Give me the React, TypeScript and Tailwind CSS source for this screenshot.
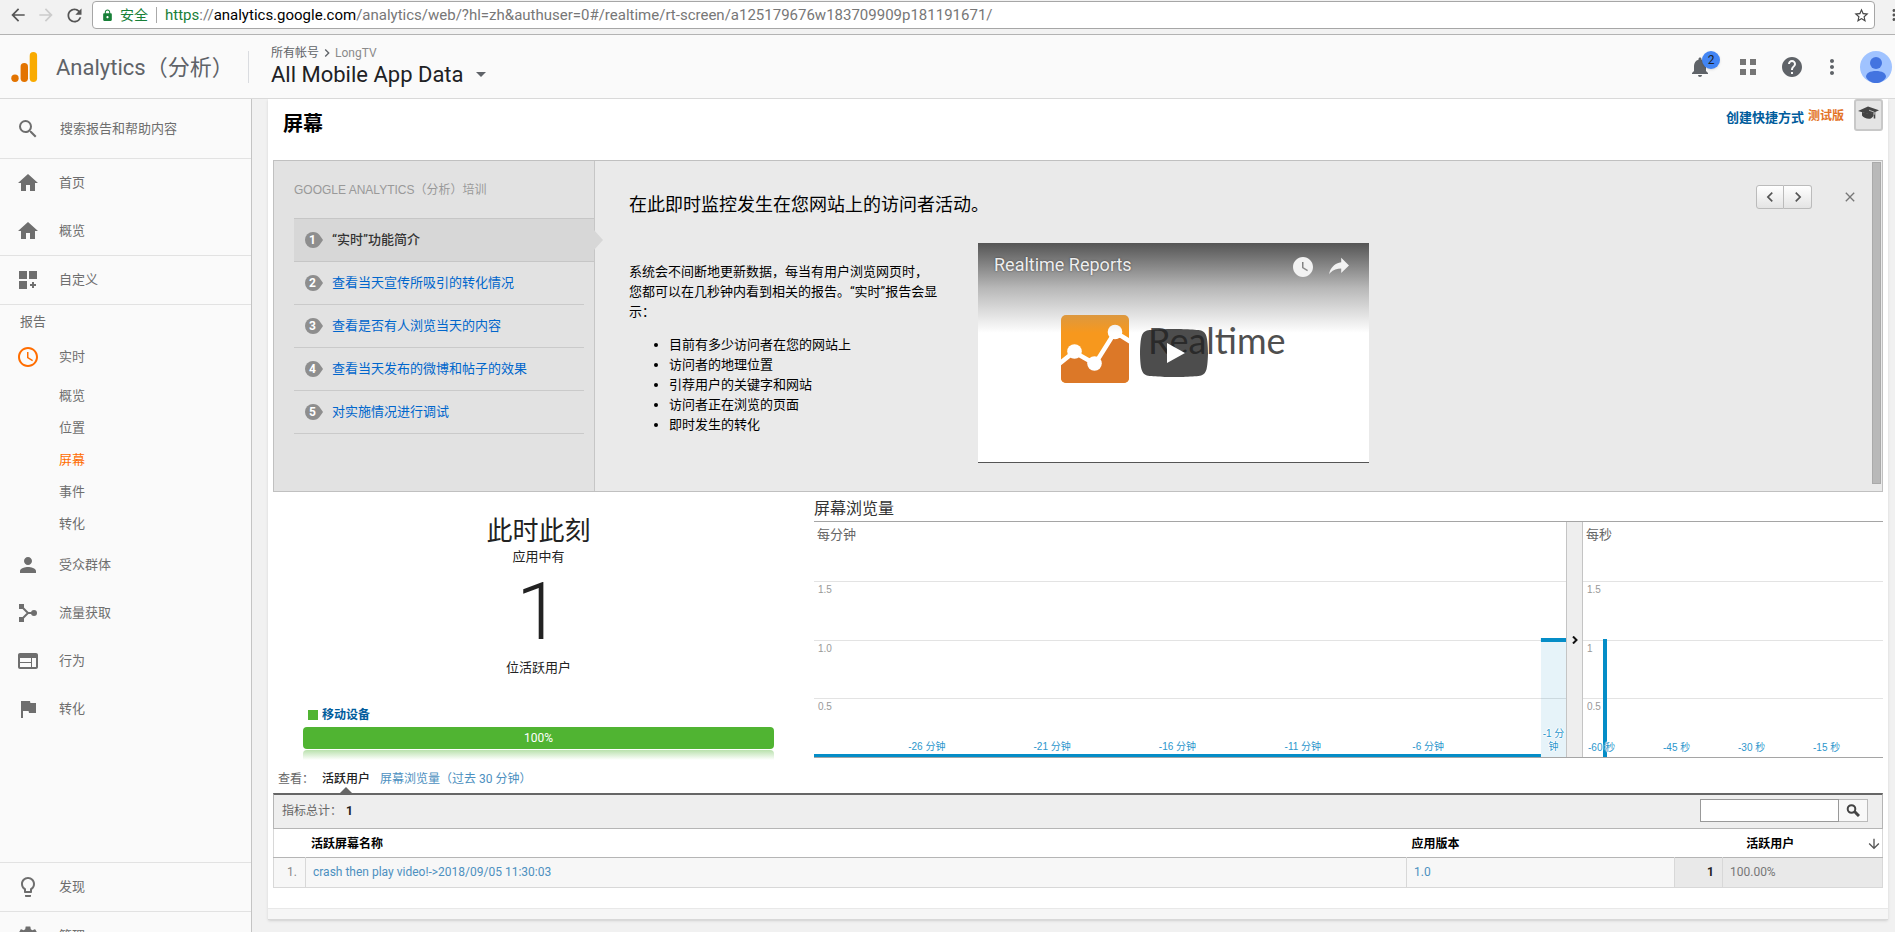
import type { ReactNode } from "react";
import {
  MdAccessTime,
  MdArrowBack,
  MdArrowDownward,
  MdArrowForward,
  MdChevronLeft,
  MdChevronRight,
  MdClose,
  MdFlag,
  MdHelp,
  MdHome,
  MdLightbulbOutline,
  MdLock,
  MdMoreVert,
  MdNotifications,
  MdPerson,
  MdRefresh,
  MdSearch,
  MdSettings,
  MdStarBorder,
  MdWatchLater,
  MdWeb,
} from "react-icons/md";

function BrowserBar() {
  return (
    <div className="flex h-[35px] shrink-0 items-center border-b border-[#b3b3b3] bg-[#f2f2f2] pb-1 pl-2">
      <button type="button" aria-label="后退" className="flex w-7 justify-start text-[#555]">
        <MdArrowBack size={20} />
      </button>
      <button type="button" aria-label="前进" className="flex w-7 justify-start text-[#ccc]">
        <MdArrowForward size={20} />
      </button>
      <button type="button" aria-label="刷新" className="flex w-7 justify-start text-[#555]">
        <MdRefresh size={21} />
      </button>
      <div className="flex h-7 flex-1 items-center rounded-sm border border-[#a6a6a6] bg-white px-2">
        <MdLock size={13} className="text-[#188038]" />
        <span className="ml-1.5 text-sm text-[#188038]">安全</span>
        <span className="mx-2 h-4 w-px bg-[#aaa]" />
        <span className="flex-1 text-[15px] text-[#777]">
          <span className="text-[#188038]">https</span>://
          <span className="text-black">analytics.google.com</span>
          /analytics/web/?hl=zh&amp;authuser=0#/realtime/rt-screen/a125179676w183709909p181191671/
        </span>
        <button type="button" aria-label="添加书签" className="-mr-1 text-[#444]">
          <MdStarBorder size={17} />
        </button>
      </div>
      <div className="flex w-5 justify-end overflow-hidden">
        <button type="button" aria-label="菜单" className="-mr-2 text-[#555]">
          <MdMoreVert size={18} />
        </button>
      </div>
    </div>
  );
}

function AnalyticsLogo() {
  return (
    <svg width="28" height="32" viewBox="0 0 28 32" aria-hidden="true">
      <circle cx="4" cy="27.300" r="3.700" fill="#e37400" />
      <rect x="9.600" y="12" width="7.400" height="19" rx="3.700" fill="#e37400" />
      <rect x="18.700" y="1" width="7.400" height="30" rx="3.700" fill="#f9ab00" />
    </svg>
  );
}

function Header() {
  return (
    <header className="flex h-16 shrink-0 items-center border-b border-[#d9d9d9] bg-[#fafafa] pl-[11px]">
      <AnalyticsLogo />
      <span className="ml-[17px] w-48 whitespace-nowrap pt-0.5 text-[22px] leading-8 text-[#5f6368]">
        Analytics（分析）
      </span>
      <span className="h-8 w-px bg-[#dadce0]" />
      <div className="ml-[22px]">
        <div className="flex items-center text-xs leading-4 text-[#5f6368]">
          <a href="#accounts">所有帐号</a>
          <MdChevronRight size={16} />
          <a href="#longtv" className="text-[#8a8a8a]">LongTV</a>
        </div>
        <button type="button" className="flex items-center text-[22px] leading-7 text-[#202124]">
          All Mobile App Data
          <svg width="10" height="5" viewBox="0 0 10 5" className="ml-3" aria-hidden="true">
            <path d="M0 0h10L5 5z" fill="#5f6368" />
          </svg>
        </button>
      </div>
      <div className="ml-auto flex items-center text-[#5f6368]">
        <button type="button" aria-label="通知" className="relative mr-[26px]">
          <MdNotifications size={24} />
          <span className="absolute -top-1 left-3.5 flex size-[18px] items-center justify-center rounded-full bg-[#4285f4] text-xs text-[#202124] shadow">
            2
          </span>
        </button>
        <button type="button" aria-label="应用" className="mr-[22px] p-0.5">
          <svg width="16" height="16" viewBox="0 0 16 16" fill="#757575" aria-hidden="true">
            <path d="M0 0h6v6H0zM10 0h6v6h-6zM0 10h6v6H0zM10 10h6v6h-6z" />
          </svg>
        </button>
        <button type="button" aria-label="帮助" className="mr-4">
          <MdHelp size={24} />
        </button>
        <button type="button" aria-label="更多" className="mr-4">
          <MdMoreVert size={24} />
        </button>
        <button type="button" aria-label="帐号" className="mr-[3px]">
          <svg width="32" height="32" viewBox="0 0 32 32" aria-hidden="true">
            <circle cx="16" cy="16" r="16" fill="#a0c3ff" />
            <circle cx="16" cy="12" r="6" fill="#4374e0" />
            <path d="M6 26c0-4 4-6 10-6s10 2 10 6c-2 4-6 6-10 6s-8-2-10-6z" fill="#4374e0" />
          </svg>
        </button>
      </div>
    </header>
  );
}

function CustomizeIcon() {
  return (
    <svg width="24" height="24" viewBox="0 0 24 24" fill="currentColor" aria-hidden="true">
      <path d="M3 3h8v8H3zM13 3h8v8h-8zM3 13h8v8H3zM16 14h2v2h2v2h-2v2h-2v-2h-2v-2h2z" />
    </svg>
  );
}

function AcquisitionIcon() {
  return (
    <svg width="24" height="24" viewBox="0 0 24 24" fill="currentColor" aria-hidden="true">
      <path d="M3 3h5v5H3zM3 16h5v5H3z" />
      <circle cx="18" cy="12" r="3" />
      <path d="M6 6l6 6-6 6M11 12h6" fill="none" stroke="currentColor" strokeWidth="2" />
    </svg>
  );
}

function GraduationCapIcon() {
  return (
    <svg width="21" height="14" viewBox="0 0 21 14" fill="currentColor" className="shrink-0" aria-hidden="true">
      <path d="M0 5L10 0.500 21 4.200 17.300 6v6.500h-1.600V6.800L12 8.500 0 5z" />
      <path d="M4 6l8 2 3.500-1.500V10c-1.500 2-3 2.800-4.500 2.800C8 12.800 5 11 4 9.500z" />
      <path d="M11 4.200l5.300 2v2.500" fill="none" stroke="#e4e4e4" strokeWidth="0.700" />
    </svg>
  );
}

function NavItem({ icon, label, active = false }: { icon: ReactNode; label: string; active?: boolean }) {
  return (
    <a href="#nav" className="flex h-12 items-center pl-4">
      <span className={active ? "mr-[19px] text-[#ff6d00]" : "mr-[19px]"}>{icon}</span>
      {label}
    </a>
  );
}

const REALTIME_PAGES = ["概览", "位置", "屏幕", "事件", "转化"];

function Sidebar() {
  return (
    <aside className="flex w-[252px] shrink-0 flex-col border-r border-[#c4c4c4] bg-[#fafafa] text-[13px] text-[#6e6e6e]">
      <label className="flex h-[60px] items-center border-b border-[#e2e2e2] pl-4">
        <MdSearch size={24} className="mr-5 shrink-0" />
        <input
          type="search"
          aria-label="搜索报告和帮助内容"
          placeholder="搜索报告和帮助内容"
          className="min-w-0 flex-1 bg-transparent outline-none placeholder:text-[#6e6e6e]"
        />
      </label>
      <nav>
        <div className="border-b border-[#e2e2e2]">
          <NavItem icon={<MdHome size={24} />} label="首页" />
          <NavItem icon={<MdHome size={24} />} label="概览" />
        </div>
        <div className="border-b border-[#e2e2e2]">
          <NavItem icon={<CustomizeIcon />} label="自定义" />
        </div>
        <div className="pb-px pl-5 pt-[7px] leading-5">报告</div>
        <NavItem icon={<MdAccessTime size={24} />} label="实时" active />
        <ul>
          {REALTIME_PAGES.map((page) => (
            <li key={page}>
              <a
                href="#page"
                className={
                  page === "屏幕"
                    ? "flex h-8 items-center pb-0.5 pl-[59px] text-[#ff6d00]"
                    : "flex h-8 items-center pb-0.5 pl-[59px]"
                }
              >
                {page}
              </a>
            </li>
          ))}
        </ul>
        <NavItem icon={<MdPerson size={24} />} label="受众群体" />
        <NavItem icon={<AcquisitionIcon />} label="流量获取" />
        <NavItem icon={<MdWeb size={24} />} label="行为" />
        <NavItem icon={<MdFlag size={24} />} label="转化" />
      </nav>
      <div className="-mb-7 mt-auto">
        <div className="border-t border-[#e2e2e2]">
          <NavItem icon={<MdLightbulbOutline size={24} />} label="发现" />
        </div>
        <div className="border-t border-[#e2e2e2]">
          <NavItem icon={<MdSettings size={24} />} label="管理" />
        </div>
      </div>
    </aside>
  );
}

function TitleRow() {
  return (
    <div className="flex h-[61px] items-start">
      <h1 className="pl-2.5 text-[20px] font-bold leading-[50px] text-black">屏幕</h1>
      <div className="ml-auto flex items-start font-bold">
        <a href="#shortcut" className="text-[13px] leading-[38px] text-[#005c9c]">创建快捷方式</a>
        <span className="ml-1 mr-2.5 text-xs leading-[34px] text-[#e37428]">测试版</span>
        <button
          type="button"
          aria-label="培训"
          className="flex h-8 w-[29px] items-center justify-center rounded-[3px] border-2 border-[#c8c8c8] bg-[#e4e4e4] pb-1 text-[#444]"
        >
          <GraduationCapIcon />
        </button>
      </div>
    </div>
  );
}

const LESSONS = [
  "“实时”功能简介",
  "查看当天宣传所吸引的转化情况",
  "查看是否有人浏览当天的内容",
  "查看当天发布的微博和帖子的效果",
  "对实施情况进行调试",
];

function StepBadge({ step }: { step: number }) {
  return (
    <span className="relative flex h-[18px] w-5 shrink-0 items-center pl-[5px] text-xs font-bold text-white">
      <svg width="20" height="18" viewBox="0 0 20 18" className="absolute left-0 top-0" aria-hidden="true">
        <path d="M9 1c3 0 5 1 6.500 3L19 9l-3.500 5C14 16 12 17 9 17A8 8 0 0 1 9 1z" fill="#8e8e8e" />
      </svg>
      <span className="relative">{step}</span>
    </span>
  );
}

function LessonList() {
  return (
    <div className="w-[321px] shrink-0 border-r border-[#c6c6c6] bg-[#e2e2e2] pl-5">
      <h2 className="pb-[19px] pt-5 text-xs leading-[18px] text-[#999] font-['Liberation_Sans','Noto_Sans_CJK_SC',sans-serif]">
        GOOGLE ANALYTICS（分析）培训
      </h2>
      <ol>
        {LESSONS.map((lesson, index) =>
          index === 0 ? (
            <li
              key={lesson}
              className="relative flex h-11 items-center border-y border-[#c6c6c6] bg-[#d7d7d7] pl-2.5 text-[#333]"
            >
              <StepBadge step={1} />
              <span className="ml-2 font-medium">{lesson}</span>
              <svg width="10" height="20" viewBox="0 0 10 20" className="absolute -right-2.5" aria-hidden="true">
                <path d="M0 0l9 10-9 10z" fill="#d7d7d7" />
              </svg>
            </li>
          ) : (
            <li key={lesson} className="mr-2.5 flex h-[43px] items-center border-b border-[#cacaca] pl-2.5">
              <StepBadge step={index + 1} />
              <a href="#lesson" className="ml-2 text-[#06c]">{lesson}</a>
            </li>
          ),
        )}
      </ol>
    </div>
  );
}

function Video() {
  return (
    <div className="relative mt-[82px] h-[220px] w-[391px] shrink-0 border-b border-[#555] bg-white">
      <svg width="68" height="68" viewBox="0 0 68 68" className="absolute left-[83px] top-[72px]" aria-hidden="true">
        <defs>
          <clipPath id="tile">
            <rect width="68" height="68" rx="5" />
          </clipPath>
        </defs>
        <g clipPath="url(#tile)">
          <rect width="68" height="68" fill="#f7981d" />
          <path d="M0 47l13-10 21 12 20-32 14 9v42H0z" fill="#dc7828" />
          <path d="M-2 49l15-12 21 12 20-32 16 10" fill="none" stroke="#fff" strokeWidth="4.500" />
          <circle cx="13.500" cy="36.500" r="7.300" fill="#fff" />
          <circle cx="33.500" cy="48.500" r="7.300" fill="#fff" />
          <circle cx="54" cy="17" r="7.300" fill="#fff" />
        </g>
      </svg>
      <span className="absolute left-[170px] top-[77px] font-['Lato',sans-serif] text-[36px] leading-10 text-[#4f4f4f]">
        Realtime
      </span>
      <div className="absolute inset-x-0 top-0 flex h-[90px] items-start bg-linear-to-b from-[#555] via-[#999]/70 to-transparent pl-4 pr-3">
        <span className="pt-2.5 font-['Roboto',sans-serif] text-[18px] leading-6 text-[#eee] [text-shadow:0_0_2px_#0008]">
          Realtime Reports
        </span>
        <button type="button" aria-label="稍后观看" className="ml-auto mr-1.5 mt-3 text-[#f2f2f2]">
          <MdWatchLater size={24} />
        </button>
        <button type="button" aria-label="分享" className="mt-[5px]">
          <svg width="36" height="36" viewBox="0 0 36 36" aria-hidden="true">
            <path
              d="M20.200 14.190V9.740l7.790 7.790-7.790 7.560v-4.560c-3.930.16-8.100 1.280-10.860 4.230-.54.37-1.740 2.530-1.220.89.96-4.330 3.680-8.470 7.860-10.270 1.330-.6 2.760-.98 4.220-1.200z"
              fill="#f2f2f2"
            />
          </svg>
        </button>
      </div>
      <button type="button" aria-label="播放" className="absolute inset-0 m-auto h-12 w-[68px]">
        <svg width="68" height="48" viewBox="0 0 68 48" aria-hidden="true">
          <path
            d="M66.520 7.740c-.78-2.930-2.490-5.410-5.420-6.190C55.790.13 34 0 34 0S12.210.13 6.900 1.550C3.970 2.330 2.270 4.810 1.480 7.740.06 13.050 0 24 0 24s.06 10.950 1.480 16.260c.78 2.930 2.490 5.410 5.420 6.190C12.210 47.870 34 48 34 48s21.790-.13 27.100-1.550c2.930-.78 4.640-3.260 5.420-6.190C67.940 34.950 68 24 68 24s-.06-10.950-1.480-16.260z"
            fill="#212121"
            fillOpacity="0.8"
          />
          <path d="M45 24L27 14v20z" fill="#fff" />
        </svg>
      </button>
    </div>
  );
}

function TrainingPanel() {
  return (
    <section className="flex min-h-[332px] border border-[#c0c0c0] bg-[#eaeaea] text-[13px]">
      <LessonList />
      <div className="flex min-w-0 flex-1 pl-[34px]">
        <div className="w-[349px] shrink-0 text-black">
          <h2 className="whitespace-nowrap pt-7 text-[18px] leading-8">在此即时监控发生在您网站上的访问者活动。</h2>
          <p className="mt-[41px] w-[311px] leading-5">
            系统会不间断地更新数据，每当有用户浏览网页时，您都可以在几秒钟内看到相关的报告。“实时”报告会显示：
          </p>
          <ul className="mt-[13px] list-disc pl-10 leading-5">
            <li>目前有多少访问者在您的网站上</li>
            <li>访问者的地理位置</li>
            <li>引荐用户的关键字和网站</li>
            <li>访问者正在浏览的页面</li>
            <li>即时发生的转化</li>
          </ul>
        </div>
        <Video />
        <div className="ml-auto mt-6 flex h-6 items-center text-[#555]">
          <button
            type="button"
            aria-label="上一个"
            className="flex h-6 w-7 items-center justify-center rounded-l-[3px] border border-[#bbb] bg-linear-to-b from-white to-[#e4e4e4]"
          >
            <MdChevronLeft size={20} />
          </button>
          <button
            type="button"
            aria-label="下一个"
            className="flex h-6 w-7 items-center justify-center rounded-r-[3px] border border-l-0 border-[#bbb] bg-linear-to-b from-white to-[#e4e4e4]"
          >
            <MdChevronRight size={20} />
          </button>
          <button type="button" aria-label="关闭" className="ml-[30px] mr-[14px] text-[#777]">
            <MdClose size={16} />
          </button>
        </div>
        <div className="mb-[7px] mr-px mt-px w-[9px] border border-[#aaa] bg-[#b9b9b9]" />
      </div>
    </section>
  );
}

function ActiveUsers() {
  return (
    <div className="ml-[30px] mr-10 text-center text-[13px] text-[#222]">
      <h2 className="pt-5 text-[26px] leading-[38px]">此时此刻</h2>
      <p className="-mt-px leading-4">应用中有</p>
      <p className="mt-[5px] text-[80px] font-light leading-[84px]">1</p>
      <p className="mt-1 leading-5">位活跃用户</p>
      <div className="mt-[27px] flex items-center pl-[5px] text-xs font-bold leading-5 text-[#005c9c]">
        <span className="mr-1 size-2.5 bg-[#50b432]" />
        移动设备
      </div>
      <div className="mt-0.5 rounded bg-[#50b432] text-xs leading-[22px] text-white">100%</div>
      <div className="mt-px h-2.5 rounded-t bg-linear-to-b from-[#50b432]/40 to-transparent" />
    </div>
  );
}

function GridRows({ labels }: { labels: string[] }) {
  return (
    <div className="absolute inset-0 grid grid-rows-4 font-['Liberation_Sans',sans-serif] text-[10px] leading-4 text-[#999]">
      <span />
      {labels.map((label) => (
        <span key={label} className="border-t border-[#e3e3e3] px-1">
          {label}
        </span>
      ))}
    </div>
  );
}

const AXIS_TEXT =
  "font-['Liberation_Sans','Noto_Sans_CJK_SC',sans-serif] text-[10px] leading-[13px] text-[#2b96cc] [text-shadow:0_0_1px_#fff,1px_0_1px_#fff,-1px_0_1px_#fff,0_1px_1px_#fff,0_-1px_1px_#fff]";
const MINUTE_TICKS = [-26, -21, -16, -11, -6];
const SECOND_TICKS = [-60, -45, -30, -15];

function MinuteChart() {
  return (
    <div className="relative flex-1">
      <GridRows labels={["1.5", "1.0", "0.5"]} />
      <span className="relative bg-white px-[3px] text-[13px] leading-[22px] text-[#666]">每分钟</span>
      <svg viewBox="0 0 30 235" preserveAspectRatio="none" className="absolute inset-0 size-full" aria-hidden="true">
        <rect x="29" y="117" width="1" height="118" fill="#058dc7" fillOpacity="0.1" />
        <rect x="29" y="116" width="1" height="4" fill="#058dc7" />
        <rect x="0" y="232" width="29" height="3" fill="#058dc7" />
      </svg>
      <div
        className={`absolute inset-x-0 bottom-1 grid grid-cols-[repeat(30,minmax(0,1fr))] items-end ${AXIS_TEXT}`}
      >
        {Array.from({ length: 30 }, (_, index) => index - 30).map((minute) => (
          <span key={minute} className="flex justify-center whitespace-nowrap text-center">
            {MINUTE_TICKS.includes(minute) ? `${minute} 分钟` : null}
            {minute === -1 ? (
              <span>
                -1 分<br />钟
              </span>
            ) : null}
          </span>
        ))}
      </div>
    </div>
  );
}

function SecondChart() {
  return (
    <div className="relative w-[300px]">
      <GridRows labels={["1.5", "1", "0.5"]} />
      <span className="relative bg-white px-[3px] text-[13px] leading-[22px] text-[#666]">每秒</span>
      <svg viewBox="0 0 300 235" preserveAspectRatio="none" className="absolute inset-0 size-full" aria-hidden="true">
        <rect x="20" y="117" width="4" height="118" fill="#058dc7" />
      </svg>
      <div className={`absolute inset-x-0 bottom-[3px] grid grid-cols-4 ${AXIS_TEXT}`}>
        {SECOND_TICKS.map((second) => (
          <span key={second} className="pl-[5px]">
            {second} 秒
          </span>
        ))}
      </div>
    </div>
  );
}

function PageViews() {
  return (
    <div>
      <h2 className="pt-1 text-[16px] leading-[25px] text-[#333]">屏幕浏览量</h2>
      <div className="flex h-[237px] border-y border-[#a5a5a5]">
        <MinuteChart />
        <button
          type="button"
          aria-label="收起"
          className="flex w-[17px] items-center justify-center border-x border-[#c4c4c4] bg-[#eee] text-[#111]"
        >
          <svg width="6" height="8" viewBox="0 0 6 8" aria-hidden="true">
            <path d="M1 0.500L4.500 4 1 7.500" fill="none" stroke="currentColor" strokeWidth="2" />
          </svg>
        </button>
        <SecondChart />
      </div>
    </div>
  );
}

function ReportTable() {
  return (
    <section className="text-xs text-[#666]">
      <div className="flex h-[33px] items-center pl-[5px]">
        <span className="pt-1">查看：</span>
        <div className="relative ml-2 flex h-full items-center font-medium text-[#222]">
          <button type="button" className="pt-1">活跃用户</button>
          <svg width="12" height="6" viewBox="0 0 12 6" className="absolute bottom-0 left-[18px]" aria-hidden="true">
            <path d="M6 0l6 6H0z" fill="#666" />
          </svg>
        </div>
        <a href="#views" className="ml-2.5 pt-1 text-[#4d90c0]">屏幕浏览量（过去 30 分钟）</a>
      </div>
      <div className="flex h-9 items-center border-x border-t-2 border-b border-x-[#b5b5b5] border-t-[#666] border-b-[#b5b5b5] bg-[#eee] pb-0.5 pl-2 pr-3.5">
        指标总计：<b className="ml-1 text-[#222]">1</b>
        <input
          type="text"
          aria-label="搜索屏幕"
          className="ml-auto h-[23px] w-[139px] border border-[#999] bg-white px-1"
        />
        <button
          type="button"
          aria-label="搜索"
          className="flex h-[23px] w-[29px] items-center justify-center border border-l-0 border-[#bbb] bg-[#f8f8f8] text-[#444]"
        >
          <svg width="14" height="13" viewBox="0 0 14 13" fill="none" stroke="currentColor" aria-hidden="true">
            <circle cx="5.500" cy="5" r="3.800" strokeWidth="2" />
            <path d="M8.500 7.500l4.500 4.500" strokeWidth="3" />
          </svg>
        </button>
      </div>
      <table className="w-full table-fixed border-collapse border border-t-0 border-[#d8d8d8] text-left">
        <colgroup>
          <col className="w-8" />
          <col />
          <col className="w-[268px]" />
          <col className="w-12" />
          <col className="w-40" />
        </colgroup>
        <thead>
          <tr className="h-7 border-b border-[#b5b5b5] text-black">
            <th colSpan={2} className="pl-[37px] pt-0.5">活跃屏幕名称</th>
            <th className="pl-[5px] pt-0.5">应用版本</th>
            <th colSpan={2} className="pt-0.5">
              <div className="flex items-center">
                <span className="flex-1 text-center">活跃用户</span>
                <MdArrowDownward size={16} className="text-[#555]" />
              </div>
            </th>
          </tr>
        </thead>
        <tbody>
          <tr className="h-[30px] bg-[#f7f7f7]">
            <td className="border-r border-[#d8d8d8] pr-2 text-right text-[#888]">1.</td>
            <td className="border-r border-[#d8d8d8] pl-[7px]">
              <a href="#screen" className="text-[#4d90c0]">crash then play video!-&gt;2018/09/05 11:30:03</a>
            </td>
            <td className="border-r border-[#d8d8d8] pl-[7px]">
              <a href="#version" className="text-[#4d90c0]">1.0</a>
            </td>
            <td className="border-r border-[#d8d8d8] bg-[#e9e9e9] pr-2 text-right font-bold text-[#222]">1</td>
            <td className="bg-[#e9e9e9] pl-[7px] text-[#777]">100.00%</td>
          </tr>
        </tbody>
      </table>
    </section>
  );
}

export default function App() {
  return (
    <div className="flex h-screen flex-col overflow-hidden bg-[#f1f1f1] font-['Roboto','Noto_Sans_CJK_SC',sans-serif]">
      <BrowserBar />
      <Header />
      <div className="flex min-h-0 flex-1">
        <Sidebar />
        <main className="min-w-0 flex-1 overflow-hidden pl-4 pr-[7px]">
          <div className="border-b border-[#d8d8d8] bg-[#f6f6f6] shadow-sm">
            <div className="border-b border-[#e8e8e8] bg-white px-[5px] pb-5">
              <TitleRow />
              <TrainingPanel />
              <div className="grid min-h-[268px] grid-cols-[541fr_1069fr]">
                <ActiveUsers />
                <PageViews />
              </div>
              <ReportTable />
            </div>
            <div className="h-2.5" />
          </div>
        </main>
      </div>
    </div>
  );
}
